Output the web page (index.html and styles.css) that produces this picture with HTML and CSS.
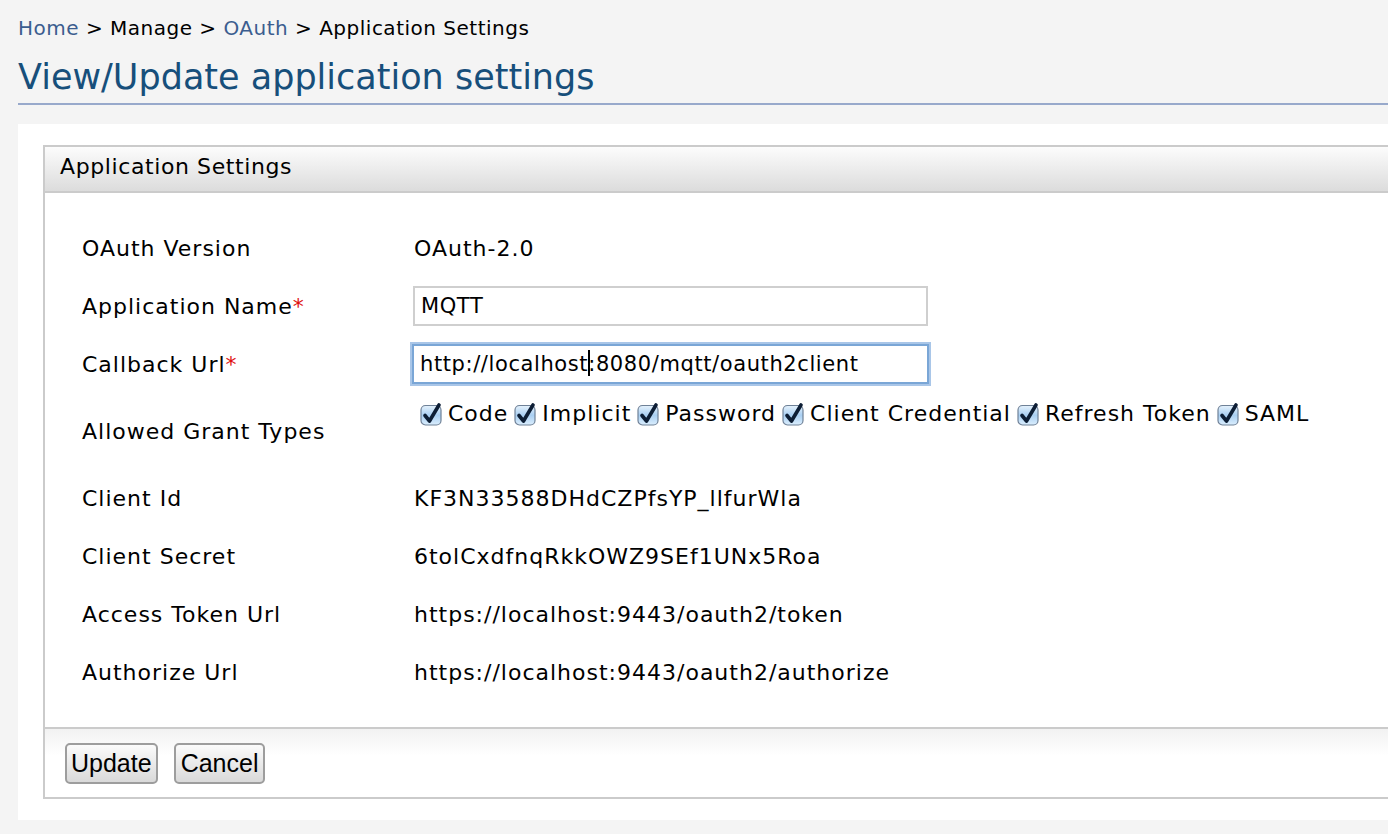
FILE: index.html
```html
<!DOCTYPE html>
<html>
<head>
<meta charset="utf-8">
<link rel="stylesheet" href="styles.css">
</head>
<body>
<div class="page">
  <div class="breadcrumb"><a class="crumb-link">Home</a> &gt; Manage &gt; <a class="crumb-link">OAuth</a> &gt; Application Settings</div>
  <h1 class="title">View/Update application settings</h1>
  <div class="panel">
    <div class="box">
      <div class="box-header">Application Settings</div>
      <div class="box-body">
        <table class="settings">
          <tr><td class="lbl">OAuth Version</td><td class="val">OAuth-2.0</td></tr>
          <tr><td class="lbl">Application Name<span class="req">*</span></td><td class="val"><div class="input">MQTT</div></td></tr>
          <tr><td class="lbl">Callback Url<span class="req">*</span></td><td class="val"><div class="input focused">http://localhost<span class="caret"></span>:8080/mqtt/oauth2client</div></td></tr>
          <tr class="grant-row"><td class="lbl">Allowed Grant Types</td><td class="val">
            <div class="grants">
              <span class="grant"><span class="cb"><svg viewBox="0 0 24 24" width="24" height="24"><defs><linearGradient id="g1" x1="0" y1="0" x2="0" y2="1"><stop offset="0" stop-color="#e6f2fc"/><stop offset="0.5" stop-color="#a9cff2"/><stop offset="1" stop-color="#dbeefd"/></linearGradient></defs><rect x="1" y="3.5" width="20" height="19.5" rx="4.5" fill="url(#g1)" stroke="#6f8197" stroke-width="1.2"/><path d="M5 13.5 L9.5 19 L19 3" fill="none" stroke="#0d1e35" stroke-width="3.6" stroke-linecap="round" stroke-linejoin="round"/></svg></span>Code</span>
              <span class="grant"><span class="cb"><svg viewBox="0 0 24 24" width="24" height="24"><rect x="1" y="3.5" width="20" height="19.5" rx="4.5" fill="url(#g1)" stroke="#6f8197" stroke-width="1.2"/><path d="M5 13.5 L9.5 19 L19 3" fill="none" stroke="#0d1e35" stroke-width="3.6" stroke-linecap="round" stroke-linejoin="round"/></svg></span>Implicit</span>
              <span class="grant"><span class="cb"><svg viewBox="0 0 24 24" width="24" height="24"><rect x="1" y="3.5" width="20" height="19.5" rx="4.5" fill="url(#g1)" stroke="#6f8197" stroke-width="1.2"/><path d="M5 13.5 L9.5 19 L19 3" fill="none" stroke="#0d1e35" stroke-width="3.6" stroke-linecap="round" stroke-linejoin="round"/></svg></span>Password</span>
              <span class="grant"><span class="cb"><svg viewBox="0 0 24 24" width="24" height="24"><rect x="1" y="3.5" width="20" height="19.5" rx="4.5" fill="url(#g1)" stroke="#6f8197" stroke-width="1.2"/><path d="M5 13.5 L9.5 19 L19 3" fill="none" stroke="#0d1e35" stroke-width="3.6" stroke-linecap="round" stroke-linejoin="round"/></svg></span>Client Credential</span>
              <span class="grant"><span class="cb"><svg viewBox="0 0 24 24" width="24" height="24"><rect x="1" y="3.5" width="20" height="19.5" rx="4.5" fill="url(#g1)" stroke="#6f8197" stroke-width="1.2"/><path d="M5 13.5 L9.5 19 L19 3" fill="none" stroke="#0d1e35" stroke-width="3.6" stroke-linecap="round" stroke-linejoin="round"/></svg></span>Refresh Token</span>
              <span class="grant"><span class="cb"><svg viewBox="0 0 24 24" width="24" height="24"><rect x="1" y="3.5" width="20" height="19.5" rx="4.5" fill="url(#g1)" stroke="#6f8197" stroke-width="1.2"/><path d="M5 13.5 L9.5 19 L19 3" fill="none" stroke="#0d1e35" stroke-width="3.6" stroke-linecap="round" stroke-linejoin="round"/></svg></span>SAML</span>
            </div>
          </td></tr>
          <tr><td class="lbl">Client Id</td><td class="val">KF3N33588DHdCZPfsYP_llfurWla</td></tr>
          <tr><td class="lbl">Client Secret</td><td class="val">6tolCxdfnqRkkOWZ9SEf1UNx5Roa</td></tr>
          <tr><td class="lbl">Access Token Url</td><td class="val">https://localhost:9443/oauth2/token</td></tr>
          <tr><td class="lbl">Authorize Url</td><td class="val">https://localhost:9443/oauth2/authorize</td></tr>
        </table>
      </div>
      <div class="box-footer">
        <button class="btn">Update</button>
        <button class="btn btn-cancel">Cancel</button>
      </div>
    </div>
  </div>
</div>
</body>
</html>
```

FILE: styles.css
```css
html, body {
  margin: 0;
  padding: 0;
  background: #f4f4f4;
  overflow: hidden;
}
body {
  font-family: "DejaVu Sans", "Noto Sans", sans-serif;
  color: #000;
}
.page {
  width: 1500px;
  padding: 15px 0 0 18px;
}
.breadcrumb {
  font-size: 20px;
  letter-spacing: 0.5px;
  line-height: 26px;
  height: 26px;
}
.crumb-link {
  color: #3b5d8f;
}
.title {
  margin: 10px 0 0 0;
  font-weight: normal;
  font-size: 35px;
  line-height: 52px;
  color: #174f7b;
  border-bottom: 2px solid #98a9cb;
  height: 52px;
}
.panel {
  margin-top: 19px;
  background: #fff;
  padding: 21px 0 21px 25px;
}
.box {
  border: 2px solid #cbcbcb;
  border-right: none;
}
.box-header {
  height: 44px;
  line-height: 40px;
  padding-left: 15px;
  font-size: 22px;
  letter-spacing: 0.6px;
  background: linear-gradient(#fcfcfc, #dcdcdc);
  border-bottom: 2px solid #cbcbcb;
}
.box-body {
  padding: 26px 0 26px 37px;
}
.settings {
  border-collapse: collapse;
}
.settings td {
  padding: 0;
  height: 58px;
  vertical-align: middle;
  font-size: 22px;
  letter-spacing: 1px;
}
.settings .lbl {
  width: 332px;
}
.req {
  color: #e01010;
}
.input {
  width: 505px;
  height: 36px;
  line-height: 36px;
  border: 2px solid #cfcfcf;
  padding-left: 6px;
  box-sizing: content-box;
  font-size: 21px;
  letter-spacing: 0.6px;
  margin-left: -1px;
}
.input.focused {
  border: 2px solid #7aa6d6;
  box-shadow: 0 0 0 2px #a9c6e8;
  margin-left: -2px;
  width: 507px;
}
.caret {
  display: inline-block;
  width: 2px;
  height: 26px;
  background: #000;
  vertical-align: -5px;
  margin-right: -2px;
}
.grant-row td {
  height: 76px;
}
.grant-row .val {
  vertical-align: top;
}
.grants {
  padding-top: 8px;
  padding-left: 6px;
  display: flex;
  gap: 6px;
  white-space: nowrap;
}
.grant {
  display: inline-flex;
  align-items: center;
}
.cb {
  display: inline-block;
  width: 24px;
  height: 24px;
  margin-right: 4px;
}
.cb svg {
  display: block;
}
.box-footer {
  border-top: 2px solid #cbcbcb;
  background: linear-gradient(#f2f2f2, #ffffff 40%);
  padding: 14px 0 13px 20px;
  display: flex;
  gap: 16px;
}
.btn {
  font-family: "Liberation Sans", Arial, sans-serif;
  font-size: 25px;
  height: 41px;
  padding: 0 4px;
  border: 2px solid #9d9d9d;
  border-radius: 5px;
  background: linear-gradient(#fbfbfb, #d9d9d9);
  color: #000;
}
.btn-cancel {
  padding: 0 5px;
}
```
